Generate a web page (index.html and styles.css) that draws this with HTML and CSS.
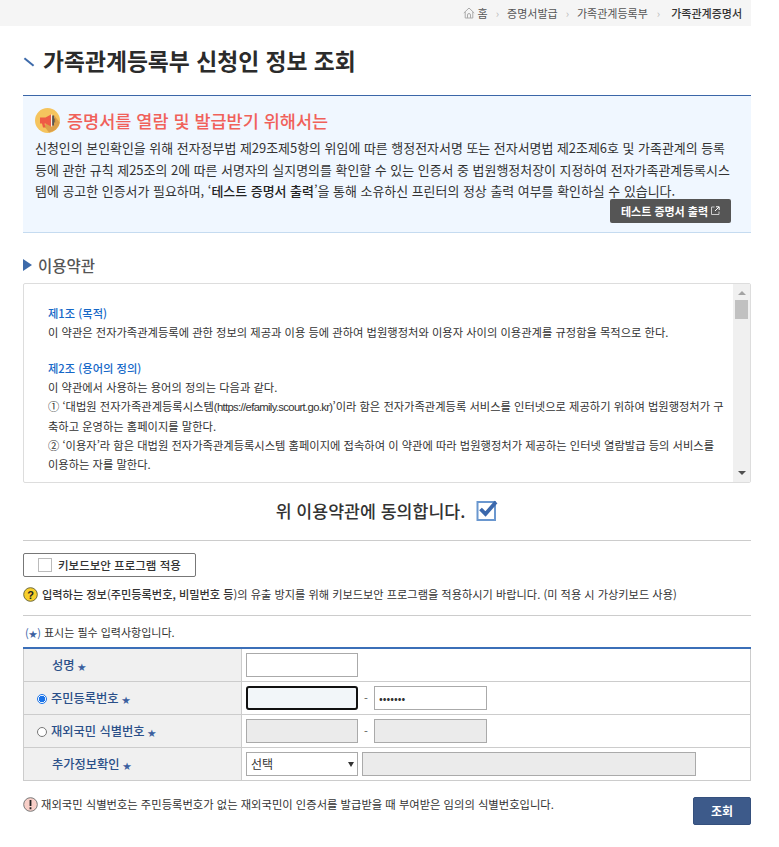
FILE: index.html
```html
<!DOCTYPE html>
<html lang="ko">
<head>
<meta charset="utf-8">
<title>가족관계등록부 신청인 정보 조회</title>
<link rel="stylesheet" href="styles.css">
</head>
<body>
<div class="page">
  <nav class="crumbs">
    <svg class="home" width="12" height="12" viewBox="0 0 12 12"><path d="M.8 6 6 1 11.200 6M2.200 5v6h7.600V5M4.500 11V8a1.500 1.500 0 0 1 3 0v3" fill="none" stroke="#aaa" stroke-width="1"/></svg>
    <span>홈</span><i>›</i><span>증명서발급</span><i>›</i><span>가족관계등록부</span><i class="wide">›</i><b>가족관계증명서</b>
  </nav>
  <main class="content">
    <h1 class="title"><span class="tick"></span>가족관계등록부 신청인 정보 조회</h1>
    <section class="notice">
      <h2 class="notice-head">
        <svg width="25" height="25" viewBox="0 0 25 25"><circle cx="12.500" cy="12.500" r="12.500" fill="#f5c45e"/><path d="M9 18l5 6.500a12.500 12.500 0 0 0 10.700-10L19 7z" fill="#dca04a"/><path d="M5 9.500h5.500L16 6.500v12l-5.500-3H9.500l1 4H8l-1-4H5z" fill="#ee5b45"/><path d="M16 6.500h1.200v12H16z" fill="#fbeee0"/><path d="M17.200 7.500h1.800v10h-1.800z" fill="#555"/><path d="M19 10.500h1.200v4H19z" fill="#8a6a3a"/></svg>
        증명서를 열람 및 발급받기 위해서는
      </h2>
      <p class="notice-text">신청인의 본인확인을 위해 전자정부법 제29조제5항의 위임에 따른 행정전자서명 또는 전자서명법 제2조제6호 및 가족관계의 등록 등에 관한 규칙 제25조의 2에 따른 서명자의 실지명의를 확인할 수 있는 인증서 중 법원행정처장이 지정하여 전자가족관계등록시스템에 공고한 인증서가 필요하며, ‘<b>테스트 증명서 출력</b>’을 통해 소유하신 프린터의 정상 출력 여부를 확인하실 수 있습니다.</p>
      <div class="notice-actions">
        <a class="btn-dark">테스트 증명서 출력
          <svg width="9" height="9" viewBox="0 0 9 9"><path d="M3.500 1H.5v7.500H8V5.500" fill="none" stroke="#ccc"/><path d="M4 5l4-4M5 .8h3.200V4" fill="none" stroke="#fff"/></svg>
        </a>
      </div>
    </section>

    <h3 class="section-head"><span class="tri"></span>이용약관</h3>
    <div class="terms">
      <div class="terms-body">
        <p class="art">제1조 (목적)</p>
        <p>이 약관은 전자가족관계등록에 관한 정보의 제공과 이용 등에 관하여 법원행정처와 이용자 사이의 이용관계를 규정함을 목적으로 한다.</p>
        <p class="art gap">제2조 (용어의 정의)</p>
        <p>이 약관에서 사용하는 용어의 정의는 다음과 같다.</p>
        <p>① ‘대법원 전자가족관계등록시스템<span class="url">(https://efamily.scourt.go.kr)</span>’이라 함은 전자가족관계등록 서비스를 인터넷으로 제공하기 위하여 법원행정처가 구축하고 운영하는 홈페이지를 말한다.</p>
        <p>② ‘이용자’라 함은 대법원 전자가족관계등록시스템 홈페이지에 접속하여 이 약관에 따라 법원행정처가 제공하는 인터넷 열람발급 등의 서비스를 이용하는 자를 말한다.</p>
      </div>
      <div class="scrollbar">
        <span class="arrow up"></span>
        <span class="thumb"></span>
        <span class="arrow down"></span>
      </div>
    </div>

    <div class="agree">
      <span>위 이용약관에 동의합니다.</span>
      <svg width="22" height="21" viewBox="0 0 22 21"><rect x="1.500" y="2" width="17.500" height="18" fill="#fff" stroke="#6a97cf" stroke-width="2"/><path d="M4.500 9l5 5 10.500-12" fill="none" stroke="#3b68ac" stroke-width="3.800"/></svg>
    </div>

    <hr class="rule rule-a">
    <button class="kbd" type="button"><span class="box"></span>키보드보안 프로그램 적용</button>
    <p class="tip">
      <svg width="15" height="15" viewBox="0 0 15 15"><circle cx="7.500" cy="7.500" r="6.800" fill="#f8cf2c" stroke="#6e6a3a"/><text x="7.500" y="11.500" text-anchor="middle" class="glyph">?</text></svg>
      <span><b>입력하는 정보</b>(<b>주민등록번호, 비밀번호 등</b>)의 유출 방지를 위해 키보드보안 프로그램을 적용하시기 바랍니다. (미 적용 시 가상키보드 사용)</span>
    </p>
    <hr class="rule">
    <p class="required"><span class="paren">(<em>★</em>)</span> 표시는 필수 입력사항입니다.</p>

    <table class="form">
      <tbody>
        <tr>
          <th class="plain">성명<em>★</em></th>
          <td><span class="fields"><input class="f-a" type="text"></span></td>
        </tr>
        <tr>
          <th><span class="radio on"></span>주민등록번호<em>★</em></th>
          <td><span class="fields"><input class="f-a focus" type="text"><span class="dash">-</span><input class="f-b" type="text" value="•••••••"></span></td>
        </tr>
        <tr>
          <th><span class="radio"></span>재외국민 식별번호<em>★</em></th>
          <td><span class="fields"><input class="f-a off" type="text" disabled><span class="dash">-</span><input class="f-b off" type="text" disabled></span></td>
        </tr>
        <tr>
          <th class="plain">추가정보확인<em>★</em></th>
          <td><span class="fields narrow"><span class="select">선택</span><input class="f-c off" type="text" disabled></span></td>
        </tr>
      </tbody>
    </table>

    <div class="foot">
      <p class="warn">
        <svg width="15" height="15" viewBox="0 0 15 15"><circle cx="7.500" cy="7.500" r="6.800" fill="#f8cfc8" stroke="#777"/><path d="M7.500 3v6M7.500 10.300v2" stroke="#222" stroke-width="1.800"/></svg>
        <span>재외국민 식별번호는 주민등록번호가 없는 재외국민이 인증서를 발급받을 때 부여받은 임의의 식별번호입니다.</span>
      </p>
      <button class="submit" type="button">조회</button>
    </div>
  </main>
</div>
</body>
</html>
```
FILE: styles.css
```css
* { box-sizing: border-box; }
html, body { margin: 0; padding: 0; height: 100%; overflow: hidden; background: #fff; }
body { font-family: "Noto Sans CJK KR", "Noto Sans", sans-serif; color: #333; font-size: 12px; }
p, h1, h2, h3 { margin: 0; font-weight: normal; }
.page { width: 751px; }

.crumbs { height: 26px; background: #f5f5f5; display: flex; align-items: center; justify-content: flex-end; padding-right: 9px; font-size: 11px; color: #555; }
.crumbs .home { margin-right: 3px; }
.crumbs i { font-style: normal; color: #bbb; margin: 0 8px; }
.crumbs i.wide { margin: 0 11px 0 9px; }
.crumbs b { font-weight: 500; color: #333; }

.content { padding-left: 23px; }
.title { height: 69px; display: flex; align-items: center; font-size: 22.800px; font-weight: 700; color: #2b2b2b; padding-bottom: 1px; }
.tick { width: 12px; height: 2px; background: #3d6aaa; transform: rotate(40deg); margin-right: 8px; flex: none; position: relative; top: 2px; }

.notice { height: 138px; background: #f0f7ff; border-top: 1px solid #3b66a8; border-bottom: 1px solid #c5dbf0; padding: 12px 17px 0 12px; }
.notice-head { display: flex; align-items: center; gap: 7px; height: 25px; font-size: 17.500px; font-weight: 500; color: #f0615a; }
.notice-text { font-size: 12.940px; line-height: 21.500px; color: #333; margin-top: 4px; }
.notice-text b { font-weight: 500; color: #222; }
.notice-actions { display: flex; justify-content: flex-end; margin: -3px 3px 0 0; }
.btn-dark { height: 24px; width: 121px; display: flex; align-items: center; justify-content: center; gap: 3px; background: #555; border-radius: 2px; color: #fff; font-size: 11px; font-weight: 700; }

.section-head { display: flex; align-items: center; height: 50px; padding-top: 14px; font-size: 15.500px; font-weight: 500; color: #555; }
.tri { width: 0; height: 0; border-left: 9px solid #3d6aaa; border-top: 6px solid transparent; border-bottom: 6px solid transparent; margin-right: 6px; }

.terms { height: 200px; border: 1px solid #ddd; border-radius: 2px; display: flex; overflow: hidden; }
.terms-body { flex: 1; padding: 20px 8px 0 24px; font-size: 11.270px; line-height: 19px; color: #333; min-width: 0; }
.terms-body .art { color: #1668c8; font-weight: 500; }
.terms-body .gap { margin-top: 17px; }
.url { font-family: "Liberation Sans", sans-serif; letter-spacing: -0.65px; }
.scrollbar { width: 17px; flex: none; background: #f0f0f0; display: flex; flex-direction: column; align-items: center; padding: 7px 0 7px; }
.arrow { width: 0; height: 0; border-left: 4px solid transparent; border-right: 4px solid transparent; flex: none; }
.arrow.up { border-bottom: 4px solid #a3a3a3; }
.arrow.down { border-top: 4px solid #505050; margin-top: auto; }
.thumb { width: 13px; height: 19px; background: #c1c1c1; margin-top: 5px; flex: none; }

.agree { display: flex; align-items: center; justify-content: center; gap: 11px; height: 57px; font-size: 17.300px; font-weight: 500; color: #333; padding-bottom: 2px; }
.rule { border: 0; border-top: 1px solid #ccc; margin: 0; }

.kbd { display: flex; align-items: center; width: 173px; height: 24px; margin-top: 12px; padding: 0 0 0 14px; border: 1px solid #777; border-radius: 2px; background: #fff; font: 500 11.500px "Noto Sans CJK KR", sans-serif; color: #333; }
.box { width: 14px; height: 14px; border: 1px solid #bbb; margin-right: 6px; flex: none; }

.tip { display: flex; align-items: center; gap: 4px; height: 38px; font-size: 11.200px; color: #333; padding-bottom: 4px; }
.tip b { font-weight: 500; }
.glyph { font: 700 11px "Liberation Sans", sans-serif; fill: #222; }

.required { height: 31px; display: flex; align-items: center; gap: 3px; padding-left: 2px; font-size: 11px; color: #333; }
.paren { color: #3b66a8; }
.paren em, th em { font-style: normal; font-size: 8.500px; color: #3b5f9f; }
th em { margin-left: 3px; }

.form { width: 728px; table-layout: fixed; border-collapse: collapse; border-top: 2px solid #3b6fb8; }
.form tr { height: 33px; }
.form th { width: 218px; background: #f0f0f0; border: 1px solid #ccc; padding: 0 0 0 13px; text-align: left; font-size: 12.250px; font-weight: 500; color: #2a4f88; white-space: nowrap; }
.form tr:first-child th, .form tr:first-child td { border-top: 0; }
.form th.plain { padding-left: 28px; }
.form td { border: 1px solid #ccc; padding: 0 0 0 4px; }
.fields { display: flex; align-items: center; }
.fields input, .select { height: 24px; border: 1px solid #aaa; background: #fff; border-radius: 0; padding: 0 4px; font: 11px "Noto Sans CJK KR", sans-serif; color: #333; outline: 0; flex: none; }
.f-a { width: 112px; }
.f-b { width: 113px; }
.f-c { width: 334px; margin-left: 4px; }
.fields input.off { background: #ebebeb; }
.fields input.focus { border: 2px solid #111; border-radius: 3px; background: #f2f6f9; }
.dash { width: 16px; text-align: center; font-size: 11px; color: #555; }
.select { width: 112px; font-size: 12px; line-height: 22px; padding-left: 4px; position: relative; display: block; }
.select::after { content: ""; position: absolute; right: 3px; top: 9px; border-left: 3px solid transparent; border-right: 3px solid transparent; border-top: 5px solid #333; }
.radio { display: inline-block; width: 10px; height: 10px; border: 1px solid #777; border-radius: 50%; margin-right: 4px; background: #fff; vertical-align: -1px; }
.radio.on { border-color: #1a73e8; background: radial-gradient(circle, #1a73e8 0 3px, #fff 3.500px); }

.foot { display: flex; justify-content: space-between; align-items: flex-start; padding-top: 16px; }
.warn { display: flex; align-items: center; gap: 3px; font-size: 11.300px; color: #333; height: 15px; }
.submit { width: 58px; height: 28px; background: #3d5a8a; border: 1px solid #35507d; border-radius: 2px; color: #fff; font: 700 12px "Noto Sans CJK KR", sans-serif; padding: 0; }
```
